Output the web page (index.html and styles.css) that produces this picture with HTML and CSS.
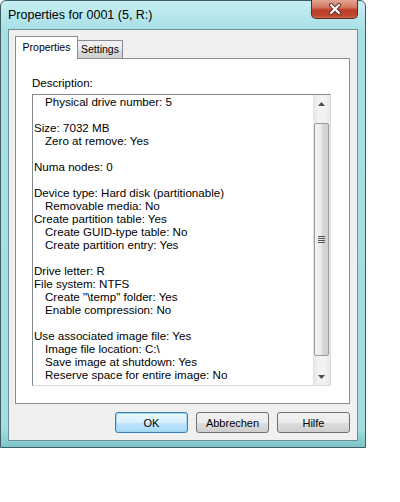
FILE: index.html
```
<!DOCTYPE html>
<html lang="en">
<head>
    <meta charset="UTF-8">
    <title>Properties for 0001 (5, R:)</title>
    <link rel="stylesheet" href="styles.css">
</head>
<body>
    <div class="window">
        <div class="titlebar">
            <span class="title">Properties for 0001 (5, R:)</span>
            <div class="close-btn">
                <svg width="16" height="12" viewBox="0 0 16 12">
                    <path d="M4 2 L12 10 M12 2 L4 10" stroke="#5a3028" stroke-width="4" stroke-linecap="round"/>
                    <path d="M4 2 L12 10 M12 2 L4 10" stroke="#ffffff" stroke-width="2.2" stroke-linecap="round"/>
                </svg>
            </div>
        </div>

        <div class="client">
            <!-- tabs -->
            <div class="tabs">
                <div class="tab active">Properties</div>
                <div class="tab">Settings</div>
            </div>

            <div class="panel">
                <div class="label">Description:</div>
                <div class="listbox">
                    <div class="lines">
                        <div class="line ind">Physical drive number: 5</div>
                        <div class="line"></div>
                        <div class="line">Size: 7032 MB</div>
                        <div class="line ind">Zero at remove: Yes</div>
                        <div class="line"></div>
                        <div class="line">Numa nodes: 0</div>
                        <div class="line"></div>
                        <div class="line">Device type: Hard disk (partitionable)</div>
                        <div class="line ind">Removable media: No</div>
                        <div class="line">Create partition table: Yes</div>
                        <div class="line ind">Create GUID-type table: No</div>
                        <div class="line ind">Create partition entry: Yes</div>
                        <div class="line"></div>
                        <div class="line">Drive letter: R</div>
                        <div class="line">File system: NTFS</div>
                        <div class="line ind">Create "\temp" folder: Yes</div>
                        <div class="line ind">Enable compression: No</div>
                        <div class="line"></div>
                        <div class="line">Use associated image file: Yes</div>
                        <div class="line ind">Image file location: C:\</div>
                        <div class="line ind">Save image at shutdown: Yes</div>
                        <div class="line ind">Reserve space for entire image: No</div>
                    </div>
                    <div class="scrollbar">
                        <div class="arrow">
                            <svg width="7" height="4" viewBox="0 0 7 4"><path d="M0 4 L3.5 0 L7 4 Z" fill="#4d4d4d"/></svg>
                        </div>
                        <div class="track">
                            <div class="thumb">
                                <div class="grip"><span></span><span></span><span></span><span></span></div>
                            </div>
                        </div>
                        <div class="arrow">
                            <svg width="7" height="4" viewBox="0 0 7 4"><path d="M0 0 L7 0 L3.5 4 Z" fill="#4d4d4d"/></svg>
                        </div>
                    </div>
                </div>
            </div>

            <div class="buttons">
                <button type="button" class="default">OK</button>
                <button type="button">Abbrechen</button>
                <button type="button">Hilfe</button>
            </div>
        </div>
    </div>
</body>
</html>
```

FILE: styles.css
```
body {
    margin: 0;
    background: #ffffff;
    font-family: "Liberation Sans", Arial, sans-serif;
}
.window {
    box-sizing: border-box;
    width: 366px;
    height: 448px;
    padding: 0 7px 6px 7px;
    border: 1px solid #3f5e63;
    border-radius: 6px 6px 0 0;
    background: linear-gradient(180deg, #c6eef2 0px, #a9e0e6 28px, #a2dde2 96%, #7cc4c9 100%);
    display: flex;
    flex-direction: column;
}
.titlebar {
    height: 28px;
    display: flex;
    align-items: flex-start;
    justify-content: space-between;
}
.title {
    margin-top: 7px;
    font-size: 12.5px;
    color: #000000;
}
.close-btn {
    box-sizing: border-box;
    width: 47px;
    height: 19px;
    margin-top: -1px;
    border: 1px solid #5b2b24;
    border-top: none;
    border-radius: 0 0 5px 5px;
    background: linear-gradient(180deg, #e3a593 0%, #d27862 40%, #be3f2a 55%, #c0432d 85%, #d06449 100%);
    display: flex;
    align-items: center;
    justify-content: center;
}
.client {
    flex: 1;
    box-sizing: border-box;
    background: #f0f0f0;
    border: 1px solid #6f8f94;
    padding: 6px 7px 0 6px;
    font-size: 11px;
    color: #000000;
}
.tabs {
    display: flex;
    align-items: flex-end;
    height: 22px;
    position: relative;
    z-index: 1;
}
.tab {
    box-sizing: border-box;
    width: 46px;
    height: 18px;
    padding-top: 2px;
    text-align: center;
    font-size: 10.5px;
    border: 1px solid #898c95;
    border-bottom: none;
    margin-left: -1px;
    background: linear-gradient(180deg, #f2f2f2 0%, #ebebeb 50%, #dddddd 51%, #cfcfcf 100%);
}
.tab.active {
    width: 63px;
    height: 23px;
    margin-left: 0;
    margin-bottom: -1px;
    padding-top: 4px;
    background: #ffffff;
}
.panel {
    box-sizing: border-box;
    height: 346px;
    border: 1px solid #898c95;
    background: #ffffff;
    padding: 18px 18px 0 16px;
}
.label {
    height: 17px;
    font-size: 11.5px;
}
.listbox {
    box-sizing: border-box;
    height: 292px;
    border: 1px solid #828790;
    border-right-color: #dadada;
    border-bottom-color: #dadada;
    display: flex;
    background: #ffffff;
}
.lines {
    flex: 1;
    padding: 0 0 0 1px;
    overflow: hidden;
    font-size: 11.6px;
}
.line {
    height: 13px;
    line-height: 13px;
    white-space: nowrap;
}
.line.ind {
    padding-left: 11px;
}
.scrollbar {
    width: 17px;
    display: flex;
    flex-direction: column;
    background: linear-gradient(90deg, #e3e3e3 0%, #f2f2f2 30%, #f2f2f2 70%, #e8e8e8 100%);
}
.arrow {
    height: 17px;
    display: flex;
    align-items: center;
    justify-content: center;
}
.track {
    flex: 1;
    padding: 11px 0 1px 0;
}
.thumb {
    box-sizing: border-box;
    height: 233px;
    margin: 0 1px;
    border: 1px solid #9b9b9b;
    border-radius: 2px;
    background: linear-gradient(90deg, #f3f3f3 0%, #e9e9e9 50%, #d9d9d9 51%, #d0d0d0 100%);
    display: flex;
    align-items: center;
    justify-content: center;
}
.grip {
    display: flex;
    flex-direction: column;
    gap: 1px;
}
.grip span {
    display: block;
    width: 7px;
    height: 1px;
    background: #555555;
}
.buttons {
    display: flex;
    justify-content: flex-end;
    gap: 8px;
    margin-top: 8px;
}
button {
    box-sizing: border-box;
    width: 73px;
    height: 21px;
    padding: 0;
    border: 1px solid #707070;
    border-radius: 3px;
    background: linear-gradient(180deg, #f2f2f2 0%, #ebebeb 50%, #dddddd 51%, #cfcfcf 100%);
    font-family: "Liberation Sans", Arial, sans-serif;
    font-size: 11px;
    color: #000000;
}
button.default {
    border-color: #3c7fb1;
    box-shadow: inset 0 0 0 1px #9fd6f2;
    background: linear-gradient(180deg, #eaf6fd 0%, #d9f0fc 50%, #bee6fd 51%, #a7d9f5 100%);
}
```
